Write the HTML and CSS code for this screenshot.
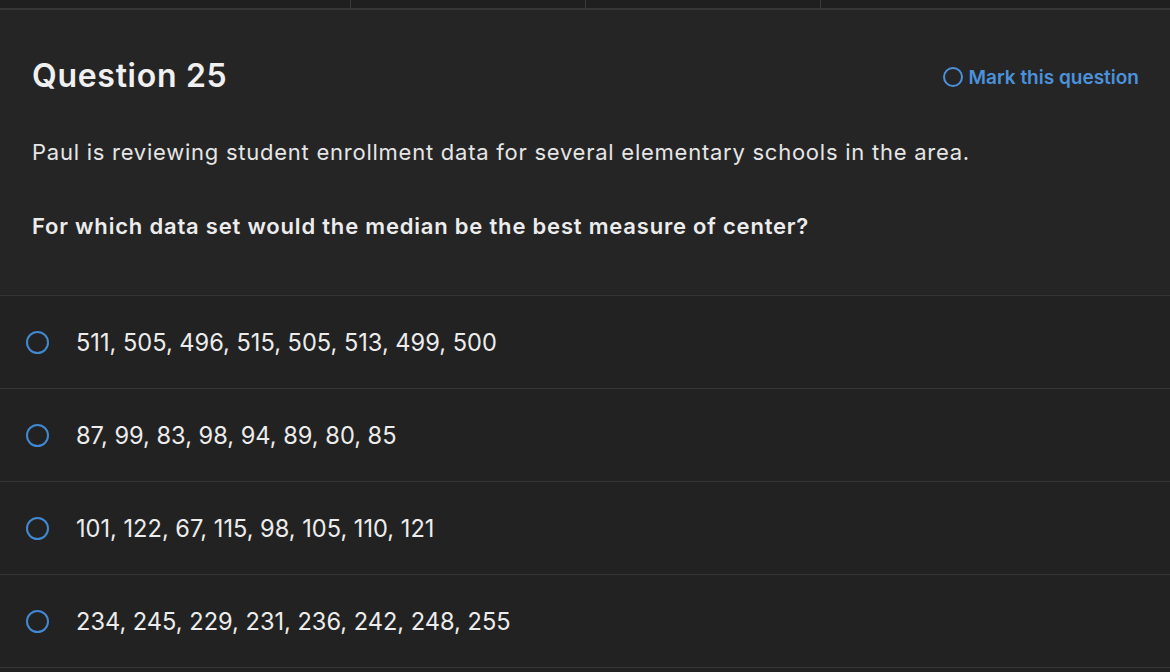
FILE: index.html
```html
<!DOCTYPE html>
<html>
<head>
<meta charset="utf-8">
<link rel="stylesheet" href="styles.css">
</head>
<body>
<div class="tabs">
  <div class="tab tab-a"></div>
  <div class="tab tab-b"></div>
  <div class="tab tab-b"></div>
  <div class="tab tab-c"></div>
</div>
<section class="question">
  <div class="title-row">
    <h1 class="title">Question 25</h1>
    <button class="mark"><span class="mark-circle"></span>Mark this question</button>
  </div>
  <p class="stem">Paul is reviewing student enrollment data for several elementary schools in the area.</p>
  <p class="prompt">For which data set would the median be the best measure of center?</p>
</section>
<ul class="options">
  <li class="option"><span class="radio"></span><span class="label">511, 505, 496, 515, 505, 513, 499, 500</span></li>
  <li class="option"><span class="radio"></span><span class="label">87, 99, 83, 98, 94, 89, 80, 85</span></li>
  <li class="option"><span class="radio"></span><span class="label">101, 122, 67, 115, 98, 105, 110, 121</span></li>
  <li class="option"><span class="radio"></span><span class="label">234, 245, 229, 231, 236, 242, 248, 255</span></li>
</ul>
</body>
</html>
```
FILE: styles.css
```css
html, body {
  margin: 0;
  padding: 0;
  background: #222222;
  font-family: "Inter", "Liberation Sans", sans-serif;
  color: #ececec;
  overflow: hidden;
}
.tabs {
  display: flex;
  height: 8px;
  background: #1f1f1f;
  border-bottom: 2px solid #363636;
}
.tab { height: 100%; }
.tab + .tab { border-left: 1px solid #3a3a3a; }
.tab-a { width: 350px; }
.tab-b { width: 234px; }
.tab-c { flex: 1; }
.question {
  background: #252525;
  padding: 45px 31px 54px 32px;
}
.title-row {
  display: flex;
  align-items: center;
  justify-content: space-between;
  height: 40px;
}
.title {
  margin: 0;
  font-size: 32px;
  font-weight: 600;
  letter-spacing: 0.7px;
  color: #f0f0f0;
}
.mark {
  display: flex;
  align-items: center;
  gap: 6px;
  background: none;
  border: none;
  padding: 0;
  margin-top: 4px;
  font-family: inherit;
  font-size: 19px;
  font-weight: 600;
  color: #4b92da;
}
.mark-circle {
  width: 16px;
  height: 16px;
  border: 2px solid #4b92da;
  border-radius: 50%;
}
.stem {
  margin: 42px 0 0;
  font-size: 22px;
  line-height: 30px;
  letter-spacing: 0.75px;
  color: #e6e6e6;
}
.prompt {
  margin: 44px 0 0;
  font-size: 22px;
  line-height: 30px;
  font-weight: 600;
  letter-spacing: 0.8px;
  color: #ececec;
}
.options {
  list-style: none;
  margin: 0;
  padding: 0;
  border-top: 1px solid #363636;
}
.option {
  display: flex;
  align-items: center;
  height: 92px;
  border-bottom: 1px solid #363636;
  padding-left: 26px;
}
.radio {
  width: 19px;
  height: 19px;
  border: 2.5px solid #4189d2;
  border-radius: 50%;
  margin-right: 27px;
  flex: none;
}
.label {
  font-size: 23.6px;
  color: #ececec;
}
```
